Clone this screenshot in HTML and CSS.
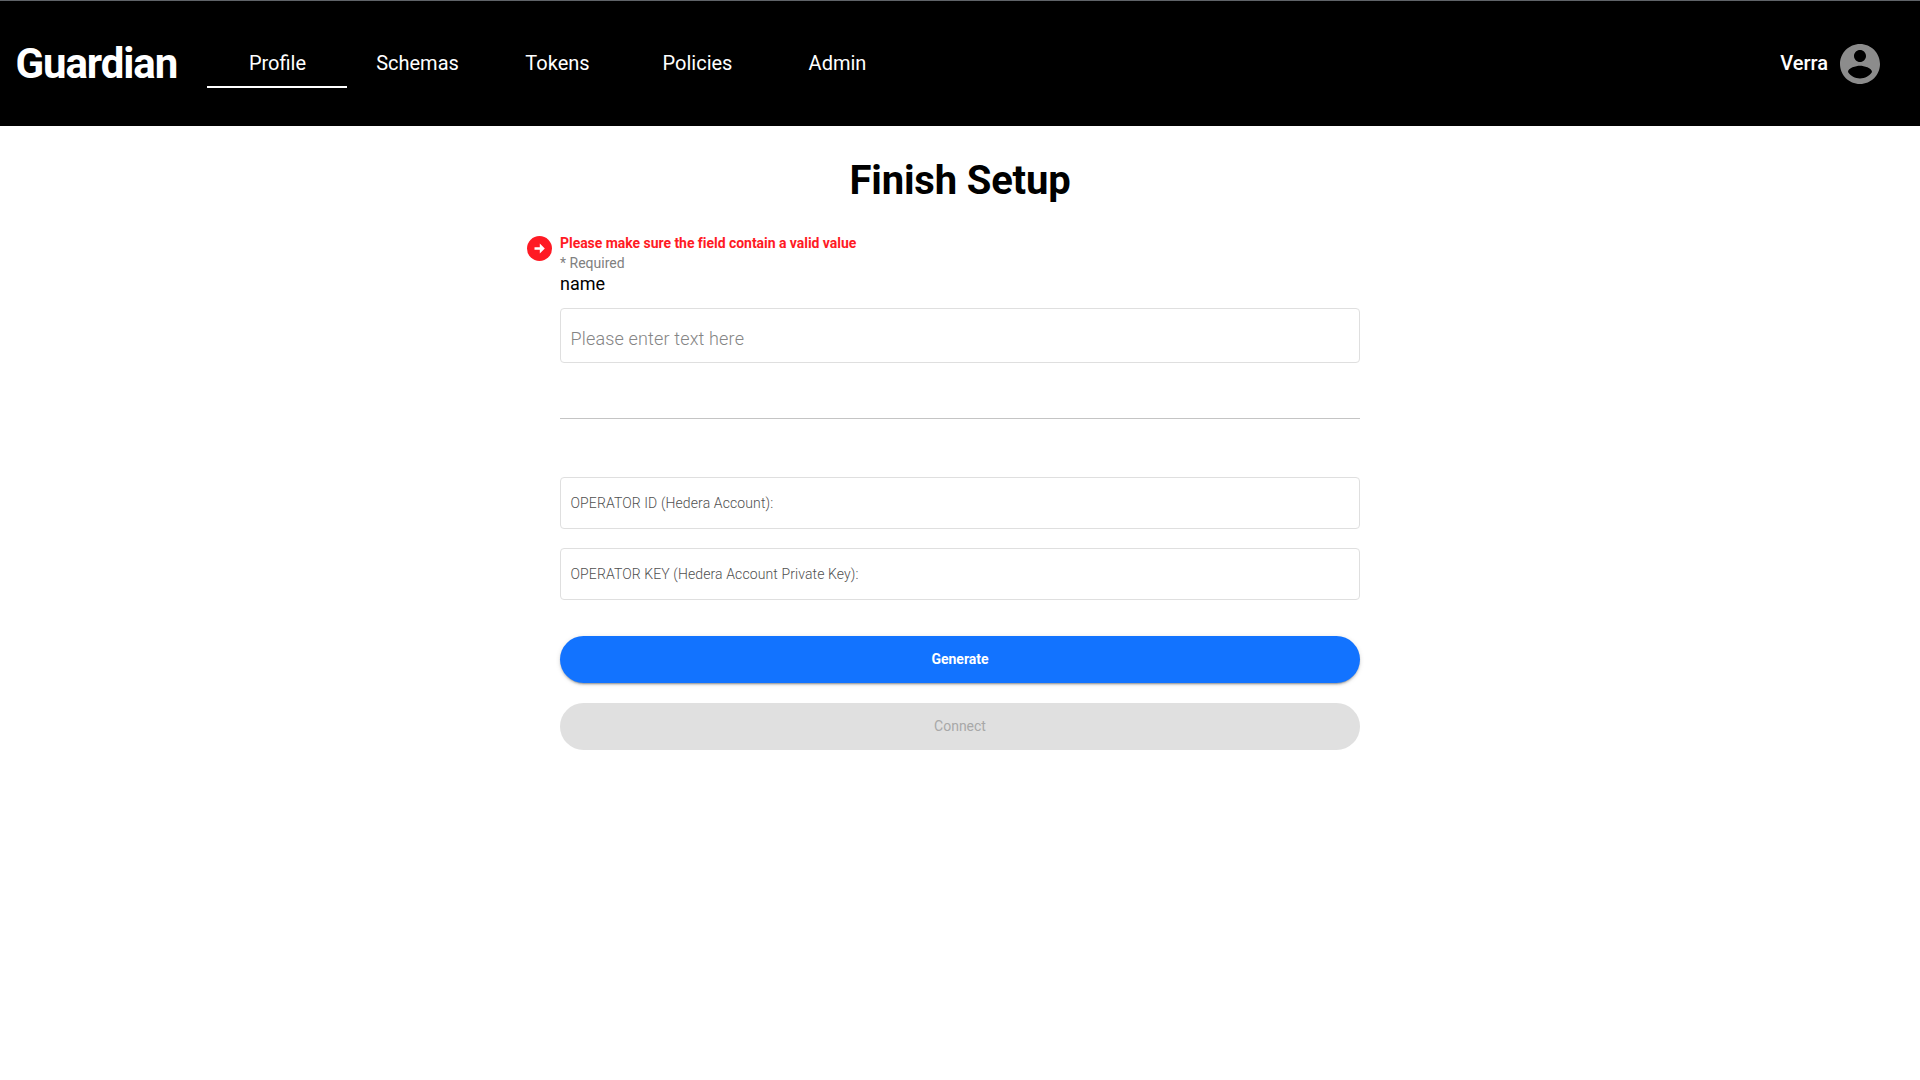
FILE: index.html
```html
<!DOCTYPE html>
<html lang="en">
<head>
<meta charset="utf-8">
<title>Guardian</title>
<link rel="stylesheet" href="styles.css">
</head>
<body>
<header class="header">
  <div class="brand">Guardian</div>
  <nav class="tabs">
    <a class="tab tab-active">Profile</a>
    <a class="tab">Schemas</a>
    <a class="tab">Tokens</a>
    <a class="tab">Policies</a>
    <a class="tab">Admin</a>
  </nav>
  <div class="user">
    <span class="user-name">Verra</span>
    <svg class="avatar" viewBox="2 2 20 20"><path fill="#8c8c8c" d="M12 2C6.48 2 2 6.48 2 12s4.480 10 10 10 10-4.480 10-10S17.520 2 12 2zm0 3c1.660 0 3 1.340 3 3s-1.340 3-3 3-3-1.340-3-3 1.340-3 3-3zm0 14.200c-2.500 0-4.710-1.280-6-3.220.030-1.990 4-3.080 6-3.080 1.990 0 5.970 1.090 6 3.080-1.290 1.940-3.500 3.220-6 3.220z"/></svg>
  </div>
</header>
<main class="content">
  <h1 class="title">Finish Setup</h1>
  <form class="form">
    <section class="field">
      <svg class="error-icon" viewBox="0 0 25 25"><circle cx="12.500" cy="12.500" r="12.500" fill="#ff1a24"/><path fill="#fff" d="M7.500 11.300h5.300V7.500l5 5-5 5v-3.800H7.500z"/></svg>
      <div class="error">Please make sure the field contain a valid value</div>
      <div class="required">* Required</div>
      <label class="label">name</label>
      <div class="box box-name">Please enter text here</div>
    </section>
    <div class="divider"></div>
    <div class="box box-operator">OPERATOR ID (Hedera Account):</div>
    <div class="box box-operator">OPERATOR KEY (Hedera Account Private Key):</div>
    <button type="button" class="button button-primary">Generate</button>
    <button type="button" class="button button-disabled" disabled>Connect</button>
  </form>
</main>
</body>
</html>
```
FILE: styles.css
```css
* { box-sizing: border-box; }
body { margin: 0; background: #fff; color: #000; font-family: Roboto, sans-serif; }
.header { display: flex; align-items: center; height: 126px; padding: 0 40px 0 15.500px; background: #000; border-top: 1px solid #5f6368; color: #fff; }
.brand { width: 191.500px; font-size: 42px; font-weight: 700; letter-spacing: -1.1px; line-height: 48px; white-space: nowrap; }
.tabs { display: flex; }
.tab { width: 140px; height: 48px; border-bottom: 2px solid transparent; padding-left: 1px; font-size: 20px; line-height: 46px; text-align: center; }
.tab-active { border-bottom-color: #fff; }
.user { display: flex; align-items: center; gap: 12px; margin-left: auto; }
.user-name { padding-bottom: 1px; font-size: 20px; font-weight: 500; }
.avatar { width: 40px; height: 40px; }
.content { width: 800px; margin: 0 auto; }
.title { margin: 31px 0 0; font-size: 40px; font-weight: 700; letter-spacing: -0.18px; line-height: 48px; text-align: center; }
.form { display: flex; flex-direction: column; padding-top: 28px; }
.field { position: relative; display: flex; flex-direction: column; }
.error-icon { position: absolute; left: -33px; top: 3px; width: 25px; height: 25px; }
.error { color: #ff1a24; font-size: 14px; font-weight: 700; letter-spacing: -0.04px; line-height: 20px; }
.required { margin-top: 1px; color: #808080; font-size: 14px; line-height: 19px; }
.label { font-size: 18px; line-height: 21px; }
.box { border: 1px solid #dfdfdf; border-radius: 4px; padding: 0 9.500px; }
.box-name { height: 55px; margin-top: 14px; color: #858585; font-size: 18px; font-weight: 300; letter-spacing: 0.16px; line-height: 59px; }
.divider { height: 1px; margin: 55px 0 58px; background: #c4c4c4; }
.box-operator { height: 52px; margin-bottom: 19px; color: #505050; font-size: 14px; font-weight: 300; letter-spacing: 0.11px; line-height: 50px; }
.button { height: 47px; border: 0; border-radius: 24px; padding: 0 6px 2px; font-family: inherit; font-size: 14px; text-align: center; }
.button-primary { margin-top: 17px; background: #1273ff; color: #fff; font-weight: 700; box-shadow: 0 3px 1px -2px rgba(0,0,0,.2), 0 2px 2px rgba(0,0,0,.14), 0 1px 5px rgba(0,0,0,.12); }
.button-disabled { margin-top: 20px; background: #e0e0e0; color: #a8a8a8; }
```
